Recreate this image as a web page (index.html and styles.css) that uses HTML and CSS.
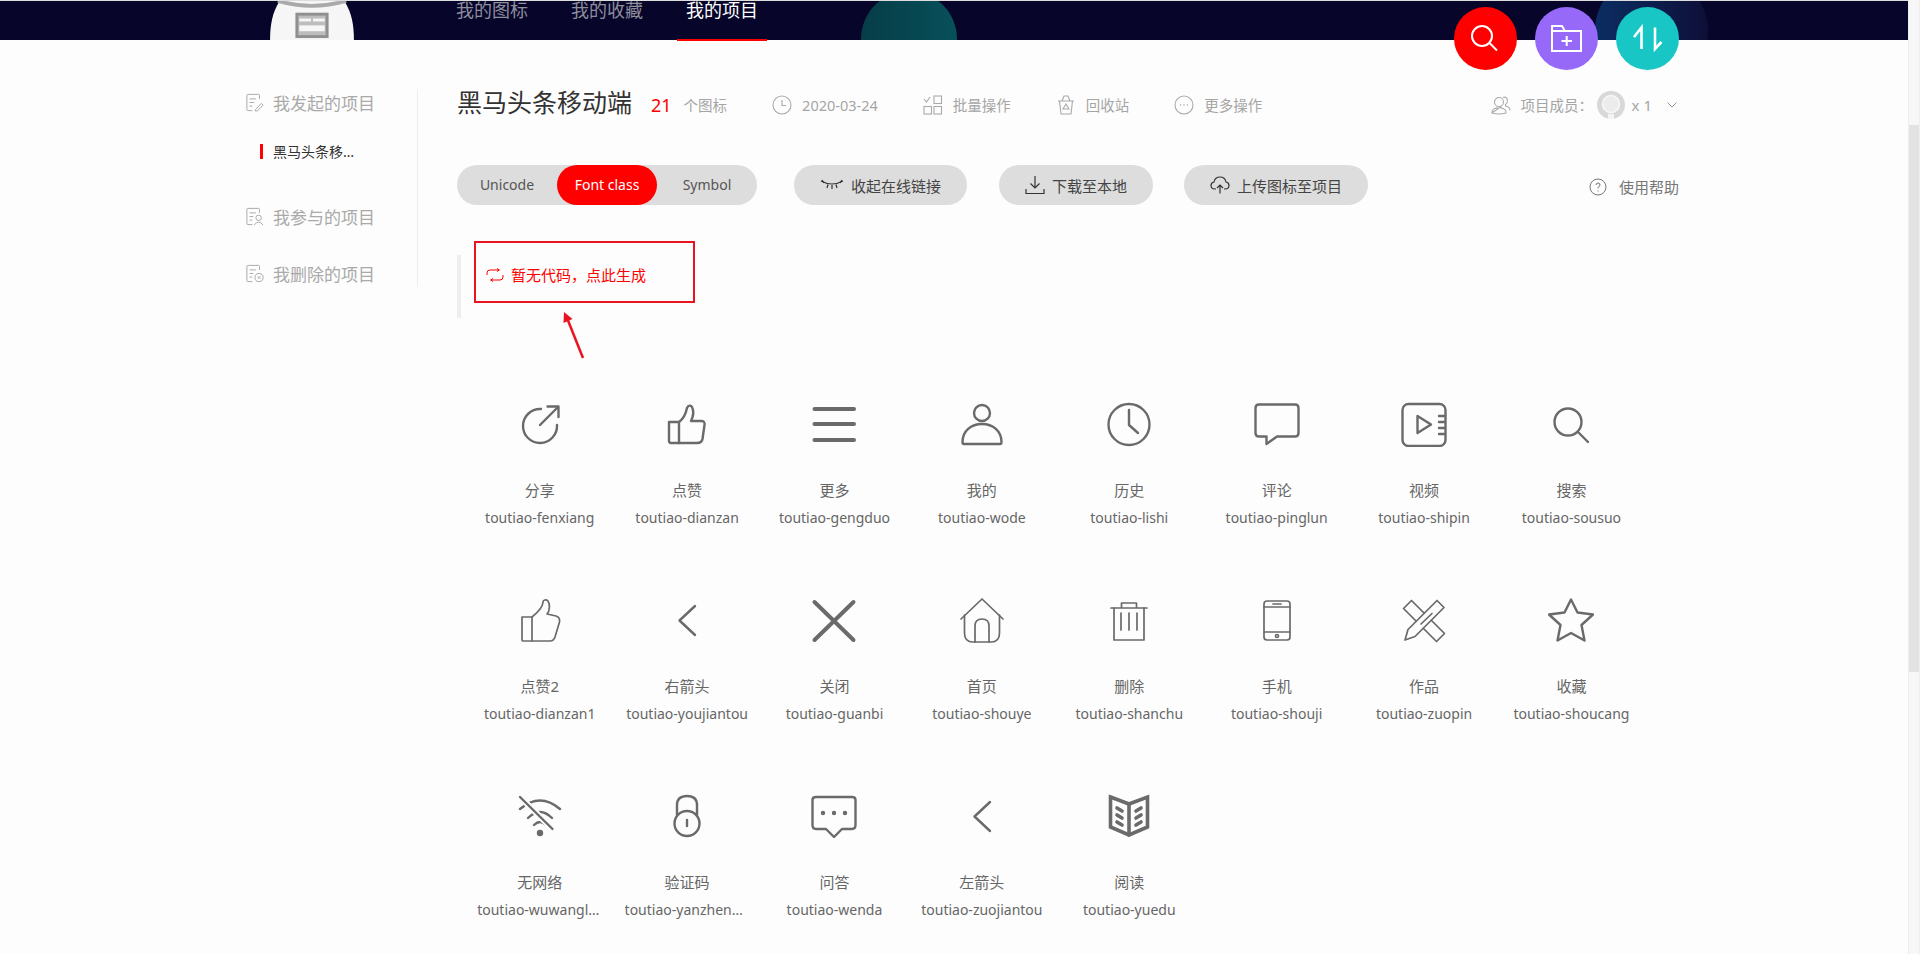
FILE: index.html
```html
<!DOCTYPE html>
<html lang="zh-CN">
<head>
  <meta charset="UTF-8" />
  <title>我的项目 - iconfont</title>
  <link rel="stylesheet" href="styles.css">
</head>
<body>
<div class="pagina">
  <div class="principal">

    <!-- Encabezado -->
    <header class="topbar">
      <div class="fondo">
        <svg class="robot" viewBox="0 0 86 40">
          <path d="M0 40 C0 22 3 8 14 -6 H72 C83 8 86 22 86 40Z" fill="#f6f6f6"/>
          <path d="M8 0 Q43 10 78 0" fill="none" stroke="#a9a9a9" stroke-width="4"/>
          <rect x="27.500" y="13.500" width="31" height="23" fill="#bdbdbd" stroke="#8f8f8f" stroke-width="3"/>
          <rect x="30" y="18" width="12" height="3" fill="#f6f6f6"/>
          <rect x="44" y="18" width="12" height="3" fill="#f6f6f6"/>
          <rect x="30" y="25" width="26" height="6" fill="#f6f6f6"/>
        </svg>
        <span class="bola bola-verde"></span>
        <span class="bola bola-azul"></span>
      </div>
      <nav class="nav">
        <a href="#">我的图标</a>
        <a href="#">我的收藏</a>
        <a href="#" class="activo">我的项目</a>
      </nav>
    </header>

    <!-- Botones flotantes -->
    <div class="fabs">
      <a href="#" class="fab fab-rojo">
        <svg viewBox="0 0 63 63"><circle cx="28" cy="29" r="10"/><path d="M35.500 36L43 43.500"/></svg>
      </a>
      <a href="#" class="fab fab-lila">
        <svg viewBox="0 0 63 63"><path d="M17 19H27L30 24H46V44H17Z"/><path d="M17 24H30"/><path d="M26.500 34H37M31.700 29V39"/></svg>
      </a>
      <a href="#" class="fab fab-teal">
        <svg viewBox="0 0 63 63"><path d="M18 30L25.500 20.500V42"/><path d="M39 20.500V42L45.500 35"/></svg>
      </a>
    </div>

    <div class="cuerpo">
      <!-- Lateral -->
      <aside class="lateral">
        <div class="grupo">
          <svg class="ic-lat" viewBox="0 0 20 20"><path d="M15 6V2Q15 1 14 1H2Q1 1 1 2V18Q1 19 2 19H7"/><path d="M4 6H11M4 10H9M4 14H7"/><path d="M10.500 18L17 11L19 13L12.500 19.500L10.500 19.500Z"/></svg>
          我发起的项目
        </div>
        <div class="proyecto"><span>黑马头条移动端</span></div>
        <div class="grupo grupo-2">
          <svg class="ic-lat" viewBox="0 0 20 20"><path d="M15 6V2Q15 1 14 1H2Q1 1 1 2V18Q1 19 2 19H7"/><path d="M4 6H11M4 10H8M4 14H7"/><circle cx="14" cy="11.500" r="3"/><path d="M9 19.500Q14 13 19 19.500"/></svg>
          我参与的项目
        </div>
        <div class="grupo grupo-3">
          <svg class="ic-lat" viewBox="0 0 20 20"><path d="M15 6V2Q15 1 14 1H2Q1 1 1 2V18Q1 19 2 19H7"/><path d="M4 6H11M4 10H8M4 14H7"/><circle cx="14.500" cy="14.500" r="4.500"/><path d="M13 13L16 16M16 13L13 16"/></svg>
          我删除的项目
        </div>
      </aside>

      <main class="contenido">
        <!-- Titulo y datos -->
        <div class="cabecera">
          <h1>黑马头条移动端</h1>
          <span class="cuenta">21</span>
          <span class="cuenta-txt">个图标</span>
          <span class="dato dato-fecha">
            <svg class="ic-dato" viewBox="0 0 20 20"><circle cx="10" cy="10" r="9"/><path d="M10 5V10.500H14"/></svg>
            2020-03-24
          </span>
          <span class="dato">
            <svg class="ic-dato" viewBox="0 0 20 20"><path d="M1 4L3.500 7L7 2"/><rect x="11" y="1" width="7.500" height="7.500"/><rect x="1" y="11.500" width="7.500" height="7.500"/><rect x="11" y="11.500" width="7.500" height="7.500"/></svg>
            批量操作
          </span>
          <span class="dato">
            <svg class="ic-dato" viewBox="0 0 20 20"><path d="M2 6H18M3.500 6L5 19H15L16.500 6M6 6L8 1H12L14 6"/><path d="M10 9L13 14H7Z"/></svg>
            回收站
          </span>
          <span class="dato">
            <svg class="ic-dato" viewBox="0 0 20 20"><circle cx="10" cy="10" r="9"/><circle class="puntito" cx="6.500" cy="10" r="0.800"/><circle class="puntito" cx="10" cy="10" r="0.800"/><circle class="puntito" cx="13.500" cy="10" r="0.800"/></svg>
            更多操作
          </span>
          <span class="miembros">
            <svg class="ic-dato" viewBox="0 0 20 20"><circle cx="8" cy="7" r="4.500"/><path d="M1 18Q1 13.500 6 13V11.500M10 11.500V13Q15 13.500 15 18Q8 20 1 18Z"/><path d="M12 2.500Q16 1 16.500 5.500Q16.500 8 14.500 9.500V11Q19 12 19 15.500"/></svg>
            <span class="miembros-txt">项目成员：</span>
            <svg class="avatar" viewBox="0 0 28 28"><circle cx="14" cy="14" r="14" fill="#d8d8d8"/><circle cx="14" cy="13" r="8.500" fill="#ececec" stroke="#f8f8f8" stroke-width="1.500"/><rect x="11" y="23" width="6" height="5" fill="#f4f4f4"/></svg>
            <span class="miembros-x">x 1</span>
            <svg class="flecha" viewBox="0 0 10 6"><path d="M0.500 0.500L5 5L9.500 0.500"/></svg>
          </span>
        </div>

        <!-- Pestañas y botones -->
        <div class="acciones">
          <div class="tabs">
            <a href="#" class="tab">Unicode</a>
            <a href="#" class="tab tab-activa">Font class</a>
            <a href="#" class="tab">Symbol</a>
          </div>
          <a href="#" class="boton boton-1">
            <svg class="ic-ojo" viewBox="0 0 24 12"><path d="M1 2Q12 8 23 2"/><path d="M4 4L2 1M8 5.500L7 9M12 6V10M16 5.500L17 9M20 4L22 1"/></svg>
            收起在线链接
          </a>
          <a href="#" class="boton boton-2">
            <svg class="ic-boton" viewBox="0 0 20 20"><path d="M10 1V13M5.500 8.500L10 13L14.500 8.500"/><path d="M1 14V18.500H19V14"/></svg>
            下载至本地
          </a>
          <a href="#" class="boton boton-3">
            <svg class="ic-boton" viewBox="0 0 20 20"><path d="M6 14H5Q1 14 1 10.500Q1 7.500 4 7Q5 2 10 2Q15 2 16 7Q19 7.500 19 10.500Q19 14 15 14H14"/><path d="M10 18.500V10M7 13L10 10L13 13"/></svg>
            上传图标至项目
          </a>
          <a href="#" class="ayuda">
            <svg class="ic-ayuda" viewBox="0 0 18 18"><circle cx="9" cy="9" r="8"/><path d="M7 7Q7 5 9 5Q11 5 11 7Q11 8.500 9 9.500V10.500M9 12.500V13.500"/></svg>
            使用帮助
          </a>
        </div>

        <!-- Bloque de codigo -->
        <div class="codigo">
          <svg class="ic-gen" viewBox="0 0 18 14"><path d="M13 2H4Q1 2 1 5V7M5 12H14Q17 12 17 9V7"/><path d="M11 0.500L13.500 2L11 3.500M7 10.500L4.500 12L7 13.500"/></svg>
          <span>暂无代码，点此生成</span>
          <div class="marca"></div>
          <svg class="marca-flecha" viewBox="0 0 30 50"><path d="M26 48L10 8" fill="none" stroke="#e8141f" stroke-width="2.500"/><path d="M7 2L15.500 9L6.500 13Z" fill="#e8141f"/></svg>
        </div>

        <!-- Iconos -->
        <ul class="iconos">
          <li class="icono">
            <svg viewBox="0 0 46 46"><path d="M24 8A17 17 0 1 0 40 24"/><path d="M23 24L41 6M30.500 5.500H41.500V16"/></svg>
            <p class="nombre">分享</p><p class="clase">toutiao-fenxiang</p>
          </li>
          <li class="icono">
            <svg viewBox="0 0 46 46"><path d="M5 21H15V42H7Q5 42 5 40Z"/><path d="M15 21C19 18 22 12 23 7C24 4 27 4 28 6C30 10 29 16 27 20H38C40 20 41 22 40.500 24L38.500 38C38 41 36 42 33 42H15"/></svg>
            <p class="nombre">点赞</p><p class="clase">toutiao-dianzan</p>
          </li>
          <li class="icono grueso">
            <svg viewBox="0 0 46 46"><path d="M3.500 8H43M3.500 23H43M3.500 39H43"/></svg>
            <p class="nombre">更多</p><p class="clase">toutiao-gengduo</p>
          </li>
          <li class="icono">
            <svg viewBox="0 0 46 46"><circle cx="23" cy="12" r="8"/><path d="M3.500 41C3.500 30 12 23 23 23C34 23 42.500 30 42.500 41Q42.500 43 41 43H5Q3.500 43 3.500 41Z"/></svg>
            <p class="nombre">我的</p><p class="clase">toutiao-wode</p>
          </li>
          <li class="icono">
            <svg viewBox="0 0 46 46"><circle cx="23" cy="23.500" r="20.500"/><path d="M23 9V24L32 32"/></svg>
            <p class="nombre">历史</p><p class="clase">toutiao-lishi</p>
          </li>
          <li class="icono">
            <svg viewBox="0 0 46 46"><path d="M5 3.500H41Q44.500 3.500 44.500 7V32Q44.500 35.500 41 35.500H23L12.500 43V35.500H5Q1.500 35.500 1.500 32V7Q1.500 3.500 5 3.500Z"/></svg>
            <p class="nombre">评论</p><p class="clase">toutiao-pinglun</p>
          </li>
          <li class="icono">
            <svg viewBox="0 0 46 46"><rect x="1.500" y="3" width="43" height="42" rx="6"/><path d="M16.500 15L30 23.500L16.500 32Z"/><path d="M38 15H44M38 21H44M38 27H44M38 33H44"/></svg>
            <p class="nombre">视频</p><p class="clase">toutiao-shipin</p>
          </li>
          <li class="icono">
            <svg viewBox="0 0 46 46"><circle cx="20" cy="21" r="13.500"/><path d="M30.500 31.500L40 41"/></svg>
            <p class="nombre">搜索</p><p class="clase">toutiao-sousuo</p>
          </li>

          <li class="icono fino">
            <svg viewBox="0 0 46 46"><path d="M5 20H15V44H6Q5 44 5 43Z"/><path d="M15 20C20 16 26 10 26 5C26 3 29 2 31 4C33 7 33 14 30 17L39 19C42 20 43 22 42.500 25L38 40C37 43 36 44 33 44H15"/></svg>
            <p class="nombre">点赞2</p><p class="clase">toutiao-dianzan1</p>
          </li>
          <li class="icono">
            <svg viewBox="0 0 46 46"><path d="M31 9L15.500 23.500L31 38"/></svg>
            <p class="nombre">右箭头</p><p class="clase">toutiao-youjiantou</p>
          </li>
          <li class="icono grueso">
            <svg viewBox="0 0 46 46"><path d="M3.500 5L42.500 43M42.500 5L3.500 43"/></svg>
            <p class="nombre">关闭</p><p class="clase">toutiao-guanbi</p>
          </li>
          <li class="icono fino">
            <svg viewBox="0 0 46 46"><path d="M2 22L23 2L44 22"/><path d="M5.500 18V36Q5.500 45 14 45H32Q40.500 45 40.500 36V18"/><path d="M16 45V29Q16 22 23 22Q30 22 30 29V45"/></svg>
            <p class="nombre">首页</p><p class="clase">toutiao-shouye</p>
          </li>
          <li class="icono fino">
            <svg viewBox="0 0 46 46"><path d="M5 11H41M15.500 11V6H30.500V11"/><path d="M8 11V43H38V11"/><path d="M15 16V33M23 16V33M31 16V33"/></svg>
            <p class="nombre">删除</p><p class="clase">toutiao-shanchu</p>
          </li>
          <li class="icono fino">
            <svg viewBox="0 0 46 46"><rect x="10" y="4" width="26" height="39" rx="3"/><path d="M10 10H36M10 35H36M19 7H27"/><circle cx="23" cy="39" r="1.500"/></svg>
            <p class="nombre">手机</p><p class="clase">toutiao-shouji</p>
          </li>
          <li class="icono fino">
            <svg viewBox="0 0 46 46"><path d="M23.250 16.250L10.500 3.500L2.500 11.500L15.250 24.250M30.250 23.250L43.500 36.500L35.500 44.500L22.250 31.250"/><path d="M36 3.500L43 10.500L14 39.500L4 43L7 32.500Z"/><path d="M20 27L31 16.500"/></svg>
            <p class="nombre">作品</p><p class="clase">toutiao-zuopin</p>
          </li>
          <li class="icono">
            <svg viewBox="0 0 46 46"><path d="M23 2.500L29.500 15.500L45 17.500L33.500 28L36.500 43.500L23 36L9.500 43.500L12.500 28L1 17.500L16.500 15.500Z"/></svg>
            <p class="nombre">收藏</p><p class="clase">toutiao-shoucang</p>
          </li>

          <li class="icono">
            <svg viewBox="0 0 46 46"><path d="M3 16Q23 -1 43 16M11 25Q23 13 35 25M17 32Q23 26 29 32"/><path class="corte" d="M3 4L35.500 36"/><path d="M3 4L35.500 36"/><circle class="punto" cx="23" cy="40" r="2"/></svg>
            <p class="nombre">无网络</p><p class="clase">toutiao-wuwangluo</p>
          </li>
          <li class="icono">
            <svg viewBox="0 0 46 46"><circle cx="23" cy="30.500" r="12.500"/><path d="M13 22V12Q13 3 23 3Q33 3 33 12V22"/><path d="M23 27V33"/></svg>
            <p class="nombre">验证码</p><p class="clase">toutiao-yanzhengma</p>
          </li>
          <li class="icono">
            <svg viewBox="0 0 46 46"><path d="M15 36H5Q1.500 36 1.500 32V7Q1.500 4 5 4H41Q44.500 4 44.500 7V32Q44.500 36 41 36H31L23 44Z"/><circle class="punto" cx="12" cy="20" r="1"/><circle class="punto" cx="23" cy="20" r="1"/><circle class="punto" cx="34" cy="20" r="1"/></svg>
            <p class="nombre">问答</p><p class="clase">toutiao-wenda</p>
          </li>
          <li class="icono">
            <svg viewBox="0 0 46 46"><path d="M31 9L15.500 23.500L31 38"/></svg>
            <p class="nombre">左箭头</p><p class="clase">toutiao-zuojiantou</p>
          </li>
          <li class="icono libro">
            <svg viewBox="0 0 46 46"><path d="M4.500 4L23 11L41.500 4V34L23 42L4.500 34Z"/><path d="M23 11V42"/><path d="M11 15L16 18M11 22L16 25M11 29L16 32M35 15L30 18M35 22L30 25M35 29L30 32"/></svg>
            <p class="nombre">阅读</p><p class="clase">toutiao-yuedu</p>
          </li>
        </ul>
      </main>
    </div>
  </div>

  <!-- Barra de desplazamiento -->
  <div class="barra"><div class="barra-thumb"></div></div>
</div>
</body>
</html>
```

FILE: styles.css
```css
* {
  box-sizing: border-box;
}

html, body {
  margin: 0;
  height: 954px;
  overflow: hidden;
}

body {
  background: #fdfdfd;
  font-family: "Noto Sans", "Noto Sans CJK SC", sans-serif;
  color: #666;
}

a {
  color: inherit;
  text-decoration: none;
}

.pagina {
  display: flex;
  height: 954px;
}

.principal {
  flex: 1;
  position: relative;
  min-width: 0;
}

/* encabezado */
.topbar {
  position: relative;
  height: 40px;
  border-top: 1px solid #ddd;
  background: #07052a;
  padding-left: 447px;
}

.fondo {
  position: absolute;
  left: 0;
  right: 0;
  top: 0;
  bottom: 0;
  overflow: hidden;
}

.robot {
  position: absolute;
  left: 269px;
  top: 0;
  width: 86px;
  height: 39px;
}

.bola {
  position: absolute;
  border-radius: 50%;
}

.bola-verde {
  left: 861px;
  top: -10px;
  width: 96px;
  height: 96px;
  background: linear-gradient(to right, #063d47, #07505a);
}

.bola-azul {
  left: 1595px;
  top: -27px;
  width: 113px;
  height: 113px;
  background: linear-gradient(to right, #0b2d62, #0e0f38);
}

.nav {
  position: relative;
  display: flex;
  gap: 25px;
  height: 39px;
}

.nav a {
  width: 90px;
  height: 40px;
  margin-top: -1px;
  text-align: center;
  font-size: 18px;
  line-height: 20px;
  color: #8d8d9c;
}

.nav a.activo {
  color: #fff;
  border-bottom: 2px solid #f00;
  height: 41px;
}

/* botones flotantes */
.fabs {
  position: absolute;
  left: 1454px;
  top: 7px;
  display: flex;
  gap: 18px;
}

.fab {
  width: 63px;
  height: 63px;
  border-radius: 50%;
}

.fab svg {
  display: block;
  width: 63px;
  height: 63px;
  fill: none;
  stroke: #fff;
  stroke-width: 2;
}

.fab-rojo { background: #f00; }
.fab-lila { background: #9669f9; }
.fab-teal { background: #18c6c6; }

.fab-teal svg {
  stroke-width: 2.6;
}

/* cuerpo */
.cuerpo {
  display: flex;
  padding: 49px 0 0 246px;
}

.lateral {
  width: 172px;
  height: 198px;
  border-right: 1px solid #eee;
  flex: none;
  padding-top: 1px;
}

.grupo {
  display: flex;
  align-items: center;
  gap: 9px;
  height: 24px;
  font-size: 17px;
  color: #a9a9a9;
}

.grupo-2 {
  margin-top: 45px;
}

.grupo-3 {
  margin-top: 33px;
}

.ic-lat {
  width: 18px;
  height: 19px;
  flex: none;
  fill: none;
  stroke: #aaa;
  stroke-width: 1.1;
}

.proyecto {
  margin: 30px 0 0 14px;
  height: 15px;
  border-left: 3px solid #f00;
  padding-left: 10px;
  font-size: 14px;
  line-height: 15px;
  color: #333;
}

.proyecto span {
  display: block;
  width: 86px;
  overflow: hidden;
  white-space: nowrap;
  text-overflow: ellipsis;
}

.contenido {
  flex: 1;
  margin-left: 39px;
  margin-right: 229px;
  min-width: 0;
}

/* titulo */
.cabecera {
  display: flex;
  align-items: center;
  height: 26px;
}

.cabecera h1 {
  margin: 0;
  font-size: 25px;
  font-weight: 400;
  line-height: 26px;
  color: #333;
  white-space: nowrap;
}

.cuenta {
  margin-left: 19px;
  margin-top: 6px;
  font-size: 18px;
  color: #f00;
}

.cuenta-txt {
  margin-left: 12px;
  margin-top: 5px;
  font-size: 14.5px;
  color: #a5a5a5;
}

.dato {
  display: flex;
  align-items: center;
  gap: 10px;
  margin-left: 45px;
  margin-top: 5px;
  font-size: 14.5px;
  color: #a5a5a5;
  white-space: nowrap;
}

.ic-dato {
  width: 20px;
  height: 20px;
  flex: none;
  fill: none;
  stroke: #aaa;
  stroke-width: 1.1;
}

.ic-dato .puntito {
  fill: #aaa;
  stroke: none;
}

.miembros {
  display: flex;
  align-items: center;
  margin-left: auto;
  margin-top: 5px;
  font-size: 14.5px;
  color: #a5a5a5;
  white-space: nowrap;
}

.miembros-txt {
  margin-left: 10px;
  width: 76px;
}

.avatar {
  width: 28px;
  height: 28px;
}

.miembros-x {
  margin-left: 7px;
  font-size: 15px;
}

.flecha {
  margin-left: 15px;
  margin-right: 2px;
  width: 10px;
  height: 6px;
  fill: none;
  stroke: #999;
}

/* pestañas y botones */
.acciones {
  display: flex;
  align-items: center;
  margin-top: 50px;
  height: 40px;
}

.tabs {
  display: flex;
  height: 40px;
  width: 300px;
  flex: none;
  border-radius: 20px;
  background: #ddd;
}

.tab {
  width: 100px;
  text-align: center;
  font-size: 14px;
  line-height: 40px;
  color: #555;
  border-radius: 20px;
}

.tab-activa {
  background: #f00;
  color: #fff;
}

.boton {
  display: flex;
  align-items: center;
  gap: 7px;
  height: 40px;
  padding: 0 26px;
  border-radius: 20px;
  background: #ddd;
  font-size: 15px;
  color: #444;
  white-space: nowrap;
}

.boton-1 {
  margin-left: 37px;
}

.boton-2 {
  margin-left: 32px;
}

.boton-3 {
  margin-left: 31px;
}

.ic-ojo {
  width: 24px;
  height: 12px;
  fill: none;
  stroke: #333;
  stroke-width: 1.2;
}

.ic-boton {
  width: 20px;
  height: 20px;
  fill: none;
  stroke: #333;
  stroke-width: 1.2;
}

.ayuda {
  display: flex;
  align-items: center;
  gap: 12px;
  margin-left: auto;
  margin-top: 3px;
  font-size: 15px;
  color: #777;
  white-space: nowrap;
}

.ic-ayuda {
  width: 18px;
  height: 18px;
  fill: none;
  stroke: #777;
  stroke-width: 1;
}

/* bloque de codigo */
.codigo {
  position: relative;
  display: flex;
  align-items: flex-start;
  gap: 7px;
  margin-top: 50px;
  height: 63px;
  border-left: 4px solid #eee;
  padding: 10px 0 0 25px;
  font-size: 15px;
  line-height: 20px;
  color: #f00;
}

.ic-gen {
  width: 18px;
  height: 14px;
  margin-top: 3px;
  fill: none;
  stroke: #f00;
  stroke-width: 1;
}

.marca {
  position: absolute;
  left: 13px;
  top: -14px;
  width: 221px;
  height: 62px;
  border: 2px solid #e8141f;
}

.marca-flecha {
  position: absolute;
  left: 96px;
  top: 55px;
  width: 30px;
  height: 50px;
}

/* iconos */
.iconos {
  display: grid;
  grid-template-columns: repeat(8, 147.4px);
  row-gap: 69px;
  list-style: none;
  margin: 83px 0 0 9px;
  padding: 0;
}

.icono {
  display: flex;
  flex-direction: column;
  align-items: center;
  min-width: 0;
}

.icono svg {
  width: 46px;
  height: 46px;
  fill: none;
  stroke: #6a6a6a;
  stroke-width: 2.4;
  stroke-linecap: round;
  stroke-linejoin: round;
}

.icono.fino svg {
  stroke-width: 1.7;
}

.icono.grueso svg {
  stroke-width: 4;
}

.icono.libro svg {
  stroke-width: 3.6;
  stroke-linejoin: miter;
}

.icono svg .corte {
  stroke: #fdfdfd;
  stroke-width: 6;
}

.icono svg .punto {
  fill: #6a6a6a;
}

.nombre {
  margin: 33px 0 0;
  font-size: 15px;
  line-height: 20px;
  color: #666;
}

.clase {
  margin: 8px 0 0;
  width: 125px;
  text-align: center;
  font-size: 14px;
  line-height: 20px;
  color: #666;
  white-space: nowrap;
  overflow: hidden;
  text-overflow: ellipsis;
}

/* barra de desplazamiento */
.barra {
  width: 12px;
  flex: none;
  height: 954px;
  background: #f7f7f7;
  border-left: 1px solid #eee;
  border-right: 1px solid #eee;
  padding-top: 125px;
}

.barra-thumb {
  height: 547px;
  background: #e3e3e3;
}
```
